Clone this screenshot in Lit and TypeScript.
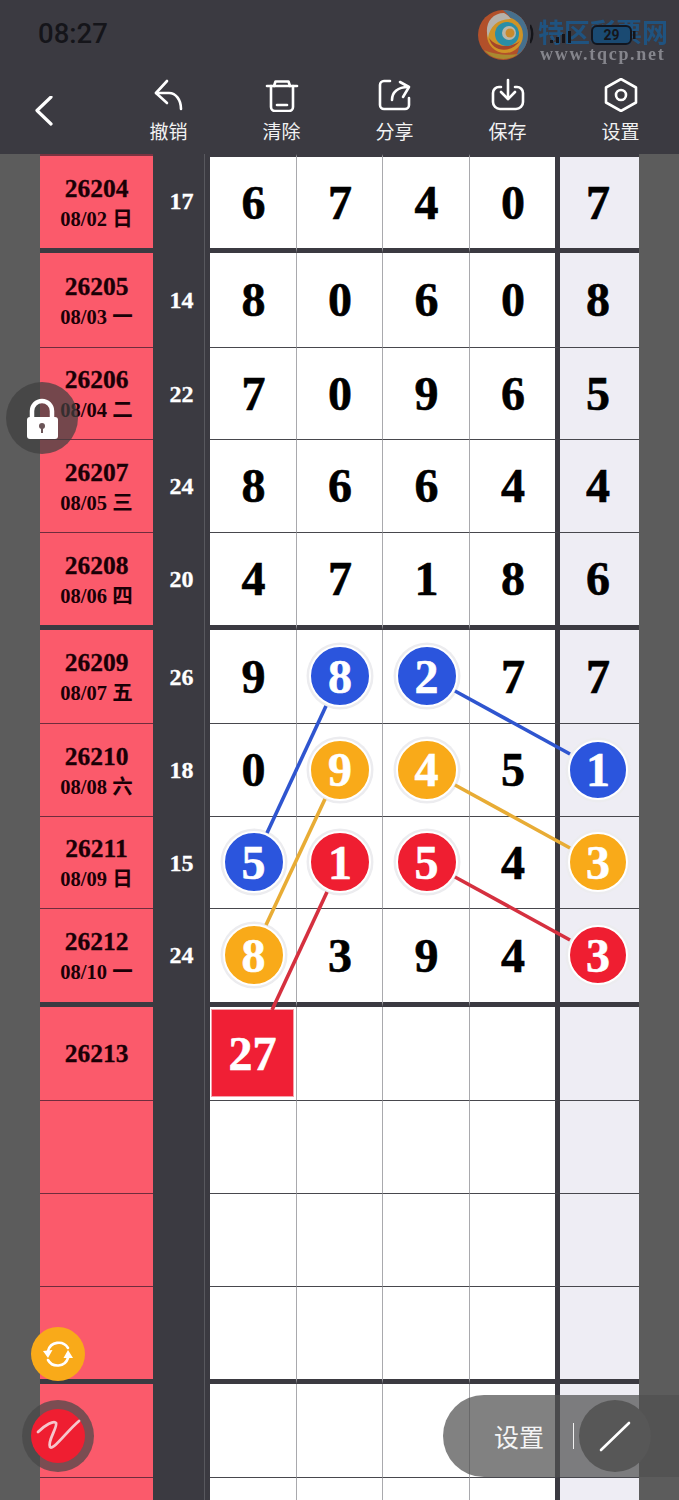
import {LitElement, html, css, svg} from "lit";
import {customElement} from "lit/decorators.js";

type Mark = "" | "b" | "y" | "r";
interface Row {
  no?: string;
  date?: string;
  sum?: string;
  nums?: string[];
  marks?: Mark[];
  h: number;
  end?: boolean;
  first?: boolean;
  box?: string;
}

const ROWS: Row[] = [
  {no: "26204", date: "08/02 日", sum: "17", nums: ["6", "7", "4", "0", "7"], h: 99, end: true, first: true},
  {no: "26205", date: "08/03 一", sum: "14", nums: ["8", "0", "6", "0", "8"], h: 95},
  {no: "26206", date: "08/04 二", sum: "22", nums: ["7", "0", "9", "6", "5"], h: 92},
  {no: "26207", date: "08/05 三", sum: "24", nums: ["8", "6", "6", "4", "4"], h: 93},
  {no: "26208", date: "08/06 四", sum: "20", nums: ["4", "7", "1", "8", "6"], h: 97, end: true},
  {no: "26209", date: "08/07 五", sum: "26", nums: ["9", "8", "2", "7", "7"], marks: ["", "b", "b", "", ""], h: 94},
  {no: "26210", date: "08/08 六", sum: "18", nums: ["0", "9", "4", "5", "1"], marks: ["", "y", "y", "", "b"], h: 93},
  {no: "26211", date: "08/09 日", sum: "15", nums: ["5", "1", "5", "4", "3"], marks: ["b", "r", "r", "", "y"], h: 92},
  {no: "26212", date: "08/10 一", sum: "24", nums: ["8", "3", "9", "4", "3"], marks: ["y", "", "", "", "r"], h: 98, end: true},
  {no: "26213", box: "27", h: 94},
  {h: 93},
  {h: 93},
  {h: 97, end: true},
  {h: 94},
  {h: 30},
];

const LINES = [
  {c: "#2f55cf", x1: 326, y1: 706, x2: 267, y2: 833},
  {c: "#2f55cf", x1: 455, y1: 691, x2: 570, y2: 754},
  {c: "#e8ac35", x1: 325, y1: 799, x2: 266, y2: 925},
  {c: "#e8ac35", x1: 455, y1: 785, x2: 570, y2: 848},
  {c: "#d5303f", x1: 327, y1: 892, x2: 272, y2: 1010},
  {c: "#d5303f", x1: 455, y1: 877, x2: 570, y2: 940},
];

@customElement("app-root")
export class AppRoot extends LitElement {
  static styles = css`
    :host {
      display: block;
      position: relative;
      width: 679px;
      height: 1500px;
      overflow: hidden;
      background: #5c5c5c;
      font-family: "Liberation Serif", "Noto Sans CJK SC", serif;
    }

    .header {
      height: 154px;
      background: #3b3a41;
      display: flex;
      flex-direction: column;
    }
    .status {
      height: 78px;
      display: flex;
      align-items: flex-start;
      padding-left: 38px;
    }
    .time {
      margin-top: 18px;
      font: 500 27.5px/32px Roboto, sans-serif;
      color: #15151a;
    }
    .brand {
      position: relative;
      margin-left: auto;
      margin-right: 11px;
      padding-top: 10px;
      display: flex;
      gap: 10px;
    }
    .brand-text {
      padding-top: 8px;
      display: flex;
      flex-direction: column;
      filter: blur(0.6px);
    }
    .brand-cn {
      font: 700 26px/26px "Noto Sans CJK SC", sans-serif;
      color: #1a5a90;
      opacity: 0.8;
      width: 130px;
    }
    .brand-en {
      font: 700 18px/21px "Liberation Serif", serif;
      letter-spacing: 1.7px;
      color: #85858c;
      margin-left: 2px;
      white-space: nowrap;
    }
    .status-icons {
      position: absolute;
      left: 52px;
      top: 0;
    }
    .toolbar {
      display: flex;
      height: 76px;
    }
    .back {
      width: 112px;
      padding: 18px 0 0 35px;
      box-sizing: border-box;
    }
    .tool {
      width: 113px;
      display: flex;
      flex-direction: column;
      align-items: center;
    }
    .tool span {
      margin-top: 7px;
      font: 19px/24px "Noto Sans CJK SC", sans-serif;
      color: #f2f2f2;
    }
    svg {
      display: block;
    }

    .row {
      display: grid;
      grid-template-columns: 113px 57px 87px 86px 87px 90px 79px;
      padding: 0 40px;
    }
    .date {
      background: #fb5a6b;
      border-bottom: 1px solid #6f2c3d;
      display: flex;
      flex-direction: column;
      align-items: center;
      justify-content: center;
      padding-top: 2px;
      box-sizing: border-box;
      font-weight: 700;
      color: #1a0006;
    }
    .date.solo {
      padding-top: 0;
    }
    .date .no {
      font-size: 25.5px;
      line-height: 30px;
      -webkit-text-stroke: 0.3px #1a0006;
    }
    .date .day {
      margin-top: 2px;
      font-size: 20.5px;
      line-height: 27px;
    }
    .sum {
      background: linear-gradient(to right, #3b3a41 51px, #58585e 51px, #58585e 52px, #3b3a41 52px);
      display: flex;
      align-items: center;
      justify-content: center;
      box-sizing: border-box;
      font-weight: 700;
      font-size: 24px;
      color: #fff;
      -webkit-text-stroke: 0.3px #fff;
    }
    .row.end .sum {
      padding-bottom: 5px;
    }
    .cell {
      background: #fff;
      border-right: 1px solid #a9a9ad;
      border-bottom: 1px solid #47474d;
      display: flex;
      align-items: center;
      justify-content: center;
      padding: 0 0 1px 1px;
      font-weight: 700;
      font-size: 48px;
      color: #000;
      -webkit-text-stroke: 0.6px #000;
      box-sizing: border-box;
    }
    .cell.d4 {
      border-right: 5px solid #3b3a41;
    }
    .cell.last {
      background: #eeedf4;
      border-right: 0;
      padding: 0 3px 1px 0;
    }
    .row.end .date,
    .row.end .cell {
      border-bottom: 5px solid #3b3a41;
    }
    .row.first .date {
      border-top: 2px solid #7a3341;
    }
    .row.first .cell {
      border-top: 3px solid #3b3a41;
    }

    .ball {
      width: 58px;
      height: 58px;
      border-radius: 50%;
      display: flex;
      align-items: center;
      justify-content: center;
      color: #fff;
      -webkit-text-stroke: 0.6px #fff;
      border: 2px solid #fff;
      box-shadow: 0 0 0 2.5px #ececef;
      flex: none;
    }
    .last .ball {
      width: 56px;
      height: 56px;
    }
    .ball.b {
      background: #2b55dd;
    }
    .ball.y {
      background: #f9aa19;
    }
    .ball.r {
      background: #ef1e31;
    }
    .box {
      width: 81px;
      height: 86px;
      margin-right: 2px;
      background: #f01f35;
      box-shadow: 0 0 0 1px #f5a2ab;
      display: flex;
      align-items: center;
      justify-content: center;
      color: #fff;
      -webkit-text-stroke: 0.6px #fff;
    }

    .lines {
      position: absolute;
      left: 0;
      top: 0;
    }
    .float {
      position: absolute;
      border-radius: 50%;
      display: flex;
      align-items: center;
      justify-content: center;
    }
    .lock {
      left: 6px;
      top: 382px;
      width: 72px;
      height: 72px;
      background: rgba(64, 64, 64, 0.72);
    }
    .sync {
      left: 31px;
      top: 1327px;
      width: 54px;
      height: 54px;
      background: #f9aa19;
    }
    .pen-ring {
      left: 22px;
      top: 1400px;
      width: 72px;
      height: 72px;
      background: rgba(72, 72, 72, 0.72);
    }
    .pen {
      width: 54px;
      height: 54px;
      border-radius: 50%;
      background: #ef1e31;
    }
    .pill {
      position: absolute;
      left: 443px;
      top: 1395px;
      width: 236px;
      height: 82px;
      box-sizing: border-box;
      border-radius: 41px 0 0 41px;
      background: rgba(81, 81, 81, 0.72);
      display: flex;
      align-items: center;
      padding-left: 51px;
    }
    .pill span {
      font: 25px/32px "Noto Sans CJK SC", sans-serif;
      color: #f4f4f4;
    }
    .pill i {
      width: 1px;
      height: 26px;
      margin-left: 29px;
      background: #f0f0f0;
    }
    .pill .knob {
      width: 72px;
      height: 72px;
      margin-left: 5px;
      border-radius: 50%;
      background: #575757;
      display: flex;
      align-items: center;
      justify-content: center;
    }
  `;

  _icon(body: unknown, size = 34) {
    return html`<svg width=${size} height=${size} viewBox="0 0 ${size} ${size}" fill="none" stroke="#fff" stroke-width="2.6" stroke-linecap="round" stroke-linejoin="round">${body}</svg>`;
  }

  _renderLogo() {
    return html`<svg width="50" height="50" viewBox="0 0 50 50" fill="none">
      <circle cx="25" cy="25" r="25" fill="#b2502a" />
      <path d="M25 0A25 25 0 0 1 50 25A25 25 0 0 1 38 46C44 36 44 16 25 0Z" fill="#46708d" />
      <path d="M6 40C14 50 30 52 40 44C30 46 14 44 6 40Z" fill="#a98a30" />
      <circle cx="27" cy="25" r="18" fill="#cf9326" />
      <path d="M26 3C13 3 6 15 10 28C12 16 20 9 33 9C31 6 28 4 26 3Z" fill="#b5b1ab" />
      <path d="M11 28C14 41 31 45 42 31C31 39 18 37 11 28Z" fill="#a5452a" />
      <circle cx="29" cy="24" r="12" fill="#2a8ea6" />
      <circle cx="31" cy="23" r="7" fill="#b9b5a8" />
      <circle cx="32" cy="23" r="4.5" fill="#c98a2c" />
    </svg>`;
  }

  _renderStatusIcons() {
    return html`<svg class="status-icons" width="116" height="50" viewBox="0 0 116 50">
      <path d="M0 25C3 30 3 38 0 43" stroke="#15151a" stroke-width="2.4" fill="none" />
      <g fill="#15151a">
        <rect x="20" y="40" width="3" height="3" />
        <rect x="26" y="37" width="3" height="6" />
        <rect x="32" y="34" width="3" height="9" />
        <rect x="38" y="31" width="3" height="12" />
      </g>
      <rect x="62" y="26" width="39" height="18" rx="5" fill="#1a4a72" stroke="#12161f" stroke-width="2" />
      <rect x="103" y="31" width="2.5" height="8" fill="#15151a" />
      <text x="81.500" y="40" text-anchor="middle" font-family="Roboto" font-weight="700" font-size="14" fill="#15151a">29</text>
    </svg>`;
  }

  _renderHeader() {
    return html`<div class="header">
      <div class="status">
        <div class="time">08:27</div>
        <div class="brand">
          ${this._renderLogo()}
          <div class="brand-text">
            <div class="brand-cn">特区彩票网</div>
            <div class="brand-en">www.tqcp.net</div>
          </div>
          ${this._renderStatusIcons()}
        </div>
      </div>
      <div class="toolbar">
        <div class="back">
          <svg width="18" height="30" viewBox="0 0 18 30" fill="none" stroke="#fff" stroke-width="3.2" stroke-linecap="round" stroke-linejoin="round"><path d="M16 1L2 14.500L16 28" /></svg>
        </div>
        <div class="tool">
          ${this._icon(svg`<path d="M15 3L4 15L15 25" /><path d="M4 15H17C24 15 29 22 29 31" />`)}
          <span>撤销</span>
        </div>
        <div class="tool">
          ${this._icon(svg`<path d="M2 8H32" /><path d="M9 8L10.500 3.500H23.500L25 8" /><path d="M6 8V29a4 4 0 0 0 4 4H24a4 4 0 0 0 4-4V8" /><path d="M12 27H22" />`)}
          <span>清除</span>
        </div>
        <div class="tool">
          ${this._icon(svg`<path d="M12 3H6a4 4 0 0 0-4 4V27a4 4 0 0 0 4 4H27a4 4 0 0 0 4-4V20" /><path d="M14 22C14 14 20 9 30 9" /><path d="M22 4L31 9L25 19" />`)}
          <span>分享</span>
        </div>
        <div class="tool">
          ${this._icon(svg`<path d="M10 9H8a6 6 0 0 0-6 6V24a7 7 0 0 0 7 7H25a7 7 0 0 0 7-7V15a6 6 0 0 0-6-6H24" /><path d="M17 2V21" /><path d="M10 14L17 21L24 14" />`)}
          <span>保存</span>
        </div>
        <div class="tool">
          ${this._icon(svg`<path d="M17 1L32 9.500V24.500L17 33L2 24.500V9.500Z" /><circle cx="17" cy="17" r="5" />`)}
          <span>设置</span>
        </div>
      </div>
    </div>`;
  }

  _renderCell(row: Row, i: number) {
    const mark = row.marks ? row.marks[i] : "";
    const cls = `cell ${i === 3 ? "d4" : ""} ${i === 4 ? "last" : ""}`;
    if (row.box && i === 0) return html`<div class=${cls}><div class="box">${row.box}</div></div>`;
    const value = row.nums ? row.nums[i] : "";
    return html`<div class=${cls}>${mark ? html`<div class="ball ${mark}">${value}</div>` : value}</div>`;
  }

  _renderRow(row: Row) {
    return html`<div class="row ${row.end ? "end" : ""} ${row.first ? "first" : ""}" style="height:${row.h}px">
      <div class="date ${row.date ? "" : "solo"}">
        ${row.no ? html`<div class="no">${row.no}</div>` : ""}
        ${row.date ? html`<div class="day">${row.date}</div>` : ""}
      </div>
      <div class="sum">${row.sum || ""}</div>
      ${[0, 1, 2, 3, 4].map((i) => this._renderCell(row, i))}
    </div>`;
  }

  render() {
    return html`
      ${this._renderHeader()}
      ${ROWS.map((row) => this._renderRow(row))}
      <svg class="lines" width="679" height="1500" viewBox="0 0 679 1500">
        ${LINES.map((l) => svg`<line x1=${l.x1} y1=${l.y1} x2=${l.x2} y2=${l.y2} stroke=${l.c} stroke-width="3.6" />`)}
      </svg>
      <div class="float lock">
        <svg width="72" height="72" viewBox="0 0 72 72">
          <path d="M26 36V29a10 10 0 0 1 20 0V36" fill="none" stroke="#fff" stroke-width="4.500" />
          <rect x="21" y="35" width="31" height="22" rx="3" fill="#fff" />
          <circle cx="36" cy="44" r="3" fill="#6b5558" />
          <rect x="35" y="45" width="2" height="6" fill="#6b5558" />
        </svg>
      </div>
      <div class="float sync">
        <svg width="54" height="54" viewBox="0 0 54 54" fill="none" stroke="#fff" stroke-width="2.600" stroke-linecap="round">
          <path d="M17 24A11 11 0 0 1 37 21" />
          <path d="M37 31A11 11 0 0 1 17 33" />
          <path d="M12 24L21.500 23L17 31Z" fill="#fff" stroke="none" />
          <path d="M42 31L32.500 31L37 23Z" fill="#fff" stroke="none" />
        </svg>
      </div>
      <div class="float pen-ring">
        <div class="pen">
          <svg width="54" height="54" viewBox="0 0 54 54" fill="none" stroke="#f6c6cc" stroke-width="2.800" stroke-linecap="round" stroke-linejoin="round">
            <path d="M7 23C14 16 23 11 25 14C27 18 16 32 19 38C22 42 36 22 48 12" />
          </svg>
        </div>
      </div>
      <div class="pill">
        <span>设置</span>
        <i></i>
        <div class="knob">
          <svg width="32" height="32" viewBox="0 0 32 32" fill="none" stroke="#fff" stroke-width="2.600" stroke-linecap="round"><path d="M2 30L30 3" /></svg>
        </div>
      </div>
    `;
  }
}
